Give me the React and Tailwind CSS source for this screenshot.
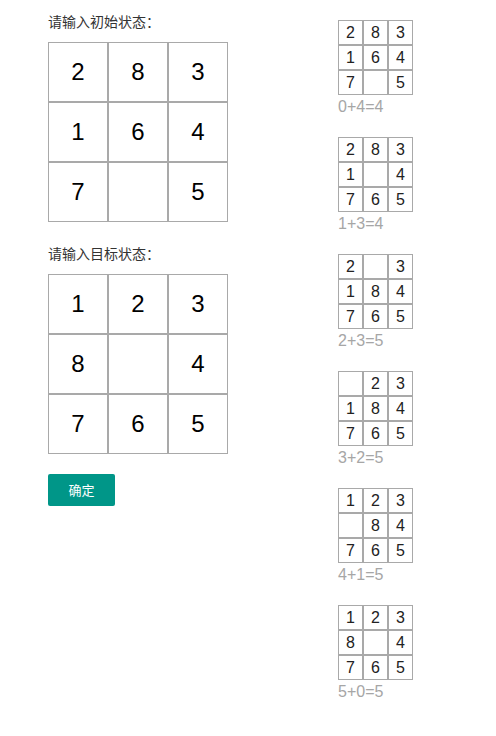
import React from "react";

const start = [2, 8, 3, 1, 6, 4, 7, null, 5];
const goal = [1, 2, 3, 8, null, 4, 7, 6, 5];

const steps = [
  { b: [2, 8, 3, 1, 6, 4, 7, null, 5], t: "0+4=4" },
  { b: [2, 8, 3, 1, null, 4, 7, 6, 5], t: "1+3=4" },
  { b: [2, null, 3, 1, 8, 4, 7, 6, 5], t: "2+3=5" },
  { b: [null, 2, 3, 1, 8, 4, 7, 6, 5], t: "3+2=5" },
  { b: [1, 2, 3, null, 8, 4, 7, 6, 5], t: "4+1=5" },
  { b: [1, 2, 3, 8, null, 4, 7, 6, 5], t: "5+0=5" },
];

function BigGrid({ cells }) {
  return (
    <div className="grid grid-cols-[60px_60px_60px] w-[180px]">
      {cells.map((c, i) => (
        <div
          key={i}
          className="h-[60px] border border-[#a9a9a9] flex items-center justify-center text-[24px] text-black"
        >
          {c ?? ""}
        </div>
      ))}
    </div>
  );
}

function SmallGrid({ cells }) {
  return (
    <div className="grid grid-cols-[25px_25px_25px] w-[75px]">
      {cells.map((c, i) => (
        <div
          key={i}
          className="h-[25px] border border-[#a9a9a9] flex items-center justify-center text-[16px] text-[#222]"
        >
          {c ?? ""}
        </div>
      ))}
    </div>
  );
}

export default function App() {
  return (
    <div
      className="w-[496px] h-[736px] bg-white flex"
      style={{ fontFamily: '"Liberation Sans", Arial, "Noto Sans CJK SC", sans-serif' }}
    >
      <div className="ml-[48px] pt-[11px] w-[180px] flex flex-col">
        <div className="text-[14px] leading-[20px] text-[#333] mb-[11px]" style={{ fontFamily: '"Noto Sans CJK SC", sans-serif' }}>
          请输入初始状态：
        </div>
        <BigGrid cells={start} />
        <div className="text-[14px] leading-[20px] text-[#333] mt-[21px] mb-[11px]" style={{ fontFamily: '"Noto Sans CJK SC", sans-serif' }}>
          请输入目标状态：
        </div>
        <BigGrid cells={goal} />
        <button
          className="mt-[20px] w-[67px] h-[32px] rounded-[2px] bg-[#009688] text-white text-[13px] flex items-center justify-center"
          style={{ fontFamily: '"Noto Sans CJK SC", sans-serif' }}
        >
          确定
        </button>
      </div>
      <div className="ml-[110px] pt-[20px] flex flex-col gap-[20px]">
        {steps.map((s, i) => (
          <div key={i} className="flex flex-col">
            <SmallGrid cells={s.b} />
            <div className="pt-[2px] text-[16px] leading-[20px] text-[#a6a6a6]">{s.t}</div>
          </div>
        ))}
      </div>
    </div>
  );
}
